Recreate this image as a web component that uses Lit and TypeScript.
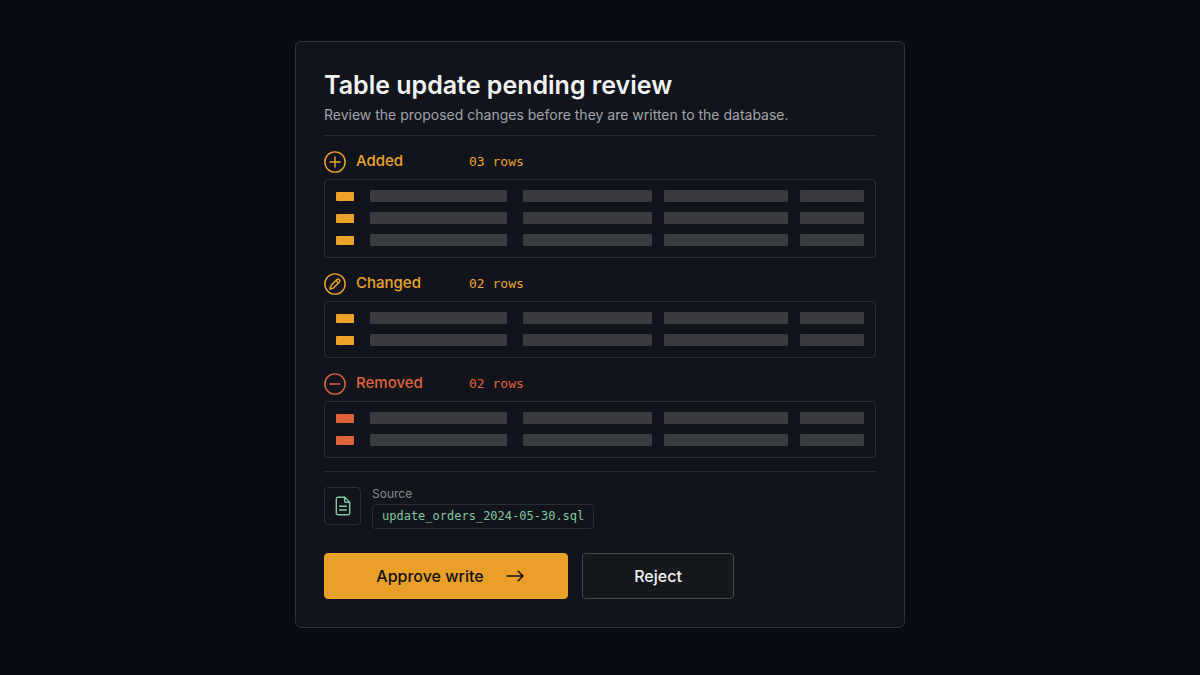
import { LitElement, html, css, svg } from "lit";
import { customElement, property } from "lit/decorators.js";
import { classMap } from "lit/directives/class-map.js";

type Kind = "added" | "changed" | "removed";

interface ChangeGroup {
  kind: Kind;
  label: string;
  rows: number;
}

const GROUPS: ChangeGroup[] = [
  { kind: "added", label: "Added", rows: 3 },
  { kind: "changed", label: "Changed", rows: 2 },
  { kind: "removed", label: "Removed", rows: 2 },
];

const GLYPHS = {
  added: svg`<path d="M11.5 6.3v10.4M6.3 11.5h10.4" />`,
  changed: svg`<path d="M6.3 16.7l1-3.6 6.2-6.2a1.6 1.6 0 0 1 2.200 0l.4.4a1.600 1.600 0 0 1 0 2.200L9.900 15.700z M12.600 7.900l2.500 2.500" />`,
  removed: svg`<path d="M6.300 11.500h10.400" />`,
};

@customElement("change-group")
class ChangeGroupView extends LitElement {
  @property({ attribute: false }) group!: ChangeGroup;

  static styles = css`
    :host {
      display: block;
    }
    .group {
      color: #eda32a;
    }
    .group.removed {
      color: #e0623a;
    }
    .head {
      display: grid;
      grid-template-columns: 22px 103px 1fr;
      column-gap: 10px;
      align-items: baseline;
      height: 24px;
      margin-bottom: 6px;
    }
    .icon {
      display: block;
      align-self: center;
      width: 22px;
      height: 22px;
      fill: none;
      stroke: currentColor;
      stroke-width: 1.5;
      stroke-linecap: round;
      stroke-linejoin: round;
    }
    .label {
      margin: 0;
      font-size: 15px;
      line-height: 24px;
      font-weight: 500;
    }
    .count {
      font-family: "DejaVu Sans Mono", monospace;
      font-size: 13px;
      line-height: 24px;
    }
    .rows {
      display: grid;
      row-gap: 10px;
      padding: 10px 11px 11px;
      border: 1px solid #2b2e33;
      border-radius: 4px;
    }
    .row {
      display: grid;
      grid-template-columns: 18px 141fr 133fr 124fr 64fr;
      column-gap: 12px;
      align-items: center;
    }
    .tag {
      height: 9px;
      border-radius: 1px;
      background: currentColor;
    }
    .bar {
      height: 12px;
      border-radius: 1px;
      background: #3a3b40;
    }
    .bar.key {
      margin-left: 4px;
    }
  `;

  render() {
    const { kind, label, rows } = this.group;
    return html`
      <section class=${classMap({ group: true, [kind]: true })}>
        <div class="head">
          <svg class="icon" viewBox="0 0 23 23" aria-hidden="true">
            <circle cx="11.5" cy="11.5" r="10.6" />
            ${GLYPHS[kind]}
          </svg>
          <h2 class="label">${label}</h2>
          <span class="count">${String(rows).padStart(2, "0")} rows</span>
        </div>
        <div class="rows" aria-hidden="true">
          ${Array.from(
            { length: rows },
            () => html`
              <div class="row">
                <span class="tag"></span>
                <span class="bar key"></span>
                <span class="bar key"></span>
                <span class="bar"></span>
                <span class="bar"></span>
              </div>
            `
          )}
        </div>
      </section>
    `;
  }
}

@customElement("app-root")
class AppRoot extends LitElement {
  static styles = css`
    :host {
      display: flex;
      justify-content: center;
      align-items: flex-start;
      box-sizing: border-box;
      min-height: 100vh;
      padding: 41px 24px;
      background: #080b12;
      color: #f1f2f4;
      font-family: Inter, "Liberation Sans", sans-serif;
    }
    .card {
      box-sizing: border-box;
      width: 100%;
      max-width: 610px;
      padding: 28px;
      border: 1px solid #2f3236;
      border-radius: 6px;
      background: #11151b;
    }
    .title {
      margin: 0;
      font-size: 25px;
      line-height: 30px;
      font-weight: 600;
    }
    .lead {
      margin: 4px 0 0;
      padding-bottom: 9px;
      border-bottom: 1px solid #26292e;
      font-size: 14px;
      line-height: 22px;
      color: #a0a3a9;
    }
    .groups {
      display: grid;
      row-gap: 13px;
      padding: 13px 0;
      border-bottom: 1px solid #26292e;
    }
    .source {
      display: flex;
      align-items: flex-start;
      gap: 11px;
      padding-top: 15px;
    }
    .file {
      display: flex;
      align-items: center;
      justify-content: center;
      box-sizing: border-box;
      width: 37px;
      height: 38px;
      border: 1px solid #2b2e33;
      border-radius: 4px;
      color: #83c5a2;
    }
    .file-icon {
      width: 16px;
      height: 20px;
      fill: none;
      stroke: currentColor;
      stroke-width: 1.4;
      stroke-linecap: round;
      stroke-linejoin: round;
    }
    .source-label {
      margin: 0 0 3px;
      font-size: 12px;
      line-height: 14px;
      color: #85888e;
    }
    .chip {
      display: block;
      padding: 0 9px;
      border: 1px solid #2b2e33;
      border-radius: 4px;
      font-family: "DejaVu Sans Mono", monospace;
      font-size: 12px;
      line-height: 23px;
      color: #83c5a2;
    }
    .actions {
      display: flex;
      gap: 14px;
      padding-top: 24px;
    }
    .button {
      display: flex;
      align-items: center;
      justify-content: center;
      gap: 22px;
      box-sizing: border-box;
      height: 46px;
      padding: 0;
      border: 1px solid #43464a;
      border-radius: 4px;
      background: #14181b;
      color: #f1f2f4;
      font-family: inherit;
      font-size: 16px;
      line-height: 24px;
      font-weight: 500;
      cursor: pointer;
      flex: 0 1 152px;
    }
    .button.primary {
      flex-basis: 244px;
      padding-left: 8px;
      border-color: #eda32a;
      background: #eaa028;
      color: #14100a;
    }
    .arrow {
      width: 18px;
      height: 12px;
      fill: none;
      stroke: currentColor;
      stroke-width: 1.5;
      stroke-linecap: round;
      stroke-linejoin: round;
    }
  `;

  render() {
    return html`
      <main class="card">
        <h1 class="title">Table update pending review</h1>
        <p class="lead">Review the proposed changes before they are written to the database.</p>
        <div class="groups">
          ${GROUPS.map((group) => html`<change-group .group=${group}></change-group>`)}
        </div>
        <div class="source">
          <div class="file">
            <svg class="file-icon" viewBox="0 0 16 20" aria-hidden="true">
              <path d="M9.600 1.300H3A1.700 1.700 0 0 0 1.300 3v14A1.700 1.700 0 0 0 3 18.700h10a1.700 1.700 0 0 0 1.700-1.700V6.400z" />
              <path d="M9.600 1.300v3.600a1.500 1.500 0 0 0 1.500 1.500h3.600" />
              <path d="M4.600 10.200h6.800M4.600 14h6.800" />
            </svg>
          </div>
          <div>
            <p class="source-label">Source</p>
            <code class="chip">update_orders_2024-05-30.sql</code>
          </div>
        </div>
        <div class="actions">
          <button class="button primary" type="button">
            Approve write
            <svg class="arrow" viewBox="0 0 18 12" aria-hidden="true">
              <path d="M1 6h16M12.200 1.300L17 6l-4.800 4.700" />
            </svg>
          </button>
          <button class="button" type="button">Reject</button>
        </div>
      </main>
    `;
  }
}
